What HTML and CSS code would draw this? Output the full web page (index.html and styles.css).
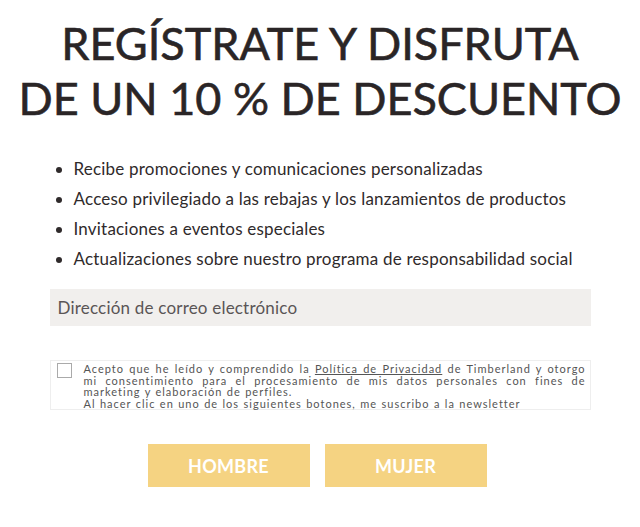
FILE: index.html
```html
<!DOCTYPE html>
<html lang="es">
<head>
<meta charset="utf-8">
<link rel="stylesheet" href="styles.css">
</head>
<body>
<div class="modal">
  <h1 class="title">REGÍSTRATE Y DISFRUTA<br>DE UN 10 % DE DESCUENTO</h1>
  <ul class="benefits">
    <li>Recibe promociones y comunicaciones personalizadas</li>
    <li>Acceso privilegiado a las rebajas y los lanzamientos de productos</li>
    <li>Invitaciones a eventos especiales</li>
    <li>Actualizaciones sobre nuestro programa de responsabilidad social</li>
  </ul>
  <div class="email">Dirección de correo electrónico</div>
  <div class="consent">
    <span class="box"></span>
    <p class="consent-text">Acepto que he leído y comprendido la <u>Política de Privacidad</u> de Timberland y otorgo mi consentimiento para el procesamiento de mis datos personales con fines de marketing y elaboración de perfiles.<br>Al hacer clic en uno de los siguientes botones, me suscribo a la newsletter</p>
  </div>
  <div class="buttons">
    <button class="btn">HOMBRE</button>
    <button class="btn">MUJER</button>
  </div>
</div>
</body>
</html>
```

FILE: styles.css
```css
html, body {
  margin: 0;
  padding: 0;
  background: #ffffff;
}
.modal {
  width: 541px;
  margin: 0 auto;
  padding-top: 16px;
  font-family: "Lato", "Liberation Sans", sans-serif;
  color: #2f2a2b;
}
.title {
  margin: 0 -40px;
  text-align: center;
  font-size: 45px;
  line-height: 55px;
  font-weight: 400;
  letter-spacing: 0;
  color: #2a2526;
  -webkit-text-stroke: 0.6px #2a2526;
}
.benefits {
  margin: 28px 0 0 0;
  padding: 0 0 0 24px;
  list-style: disc;
  font-size: 17px;
  line-height: 30px;
  letter-spacing: 0.2px;
  color: #2f2a2b;
}
.email {
  margin-top: 15px;
  height: 37px;
  background: #f1efed;
  padding-left: 8px;
  display: flex;
  align-items: center;
  font-size: 17px;
  letter-spacing: 0.2px;
  color: #5a5556;
}
.consent {
  margin-top: 34px;
  border: 1px solid #eeeeee;
  display: flex;
  gap: 12px;
  padding: 2px 4px 0 6px;
}
.box {
  flex: none;
  width: 15px;
  height: 15px;
  border: 1px solid #aaaaaa;
  margin-top: 0;
  box-sizing: border-box;
}
.consent-text {
  margin: 0;
  font-size: 11px;
  line-height: 11.5px;
  text-align: justify;
  color: #555;
  letter-spacing: 1px;
  word-spacing: 0.6px;
}
.buttons {
  margin-top: 34px;
  display: flex;
  justify-content: center;
  gap: 15px;
  padding-right: 6px;
}
.btn {
  width: 162px;
  height: 43px;
  border: none;
  background: #f5d382;
  color: #ffffff;
  font-family: "Lato", "Liberation Sans", sans-serif;
  font-weight: 700;
  font-size: 18px;
  letter-spacing: 0.3px;
}
```
